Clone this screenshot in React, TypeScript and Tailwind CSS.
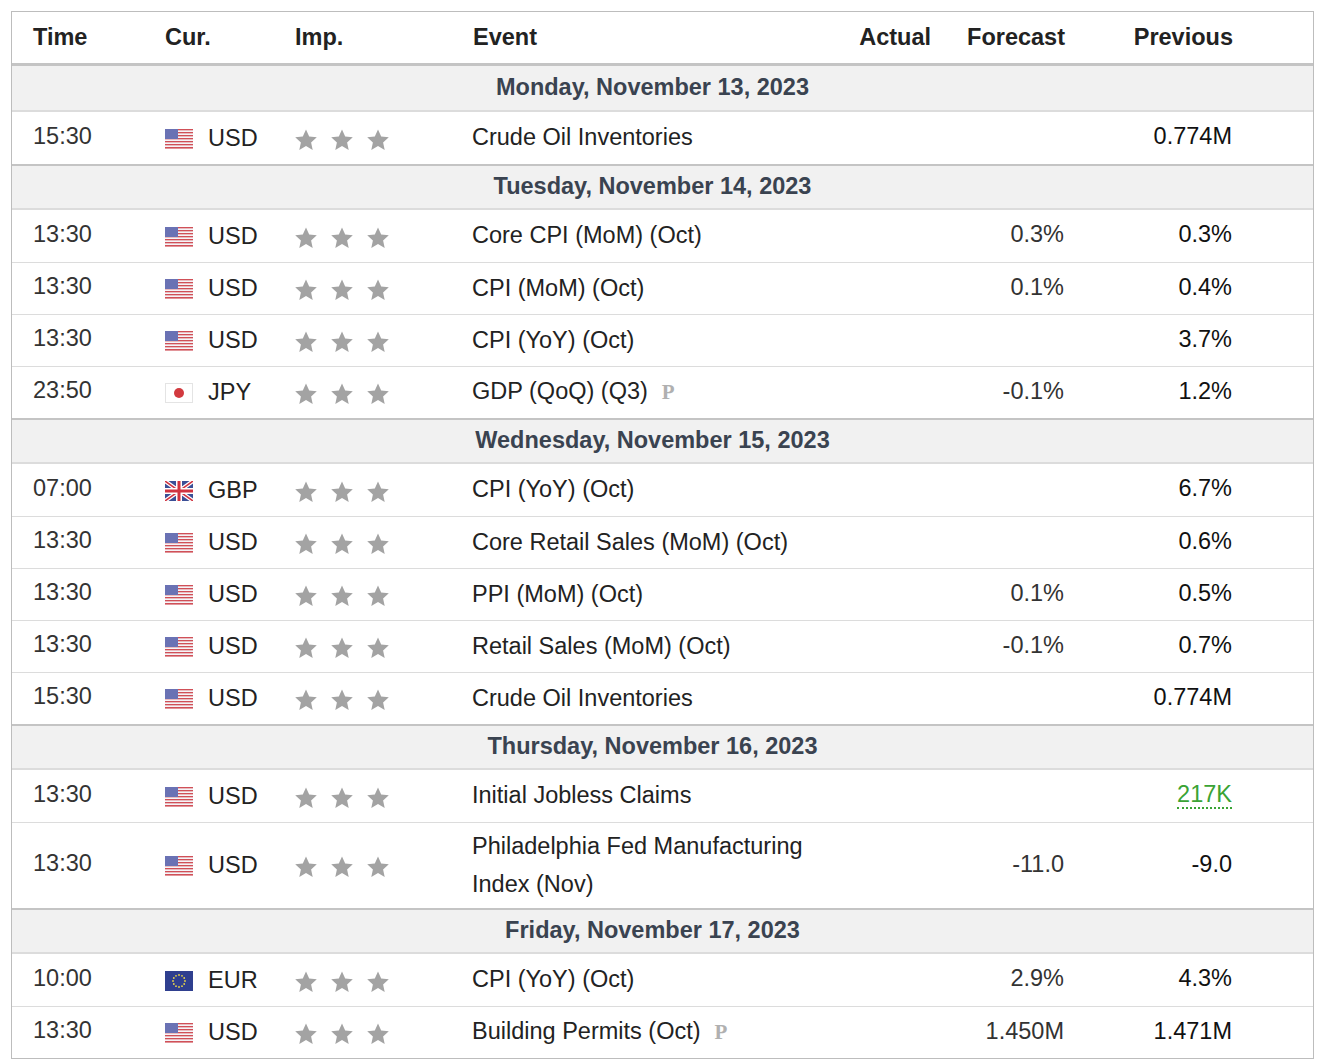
import React from "react";

type Row = { t: string; c: "USD" | "JPY" | "GBP" | "EUR"; e: string; p?: boolean; a?: string; f?: string; v?: string; green?: boolean; tall?: boolean };
type Day = { d: string; rows: Row[] };

const data: Day[] = [
  { d: "Monday, November 13, 2023", rows: [{ t: "15:30", c: "USD", e: "Crude Oil Inventories", v: "0.774M" }] },
  { d: "Tuesday, November 14, 2023", rows: [
    { t: "13:30", c: "USD", e: "Core CPI (MoM) (Oct)", f: "0.3%", v: "0.3%" },
    { t: "13:30", c: "USD", e: "CPI (MoM) (Oct)", f: "0.1%", v: "0.4%" },
    { t: "13:30", c: "USD", e: "CPI (YoY) (Oct)", v: "3.7%" },
    { t: "23:50", c: "JPY", e: "GDP (QoQ) (Q3)", p: true, f: "-0.1%", v: "1.2%" },
  ] },
  { d: "Wednesday, November 15, 2023", rows: [
    { t: "07:00", c: "GBP", e: "CPI (YoY) (Oct)", v: "6.7%" },
    { t: "13:30", c: "USD", e: "Core Retail Sales (MoM) (Oct)", v: "0.6%" },
    { t: "13:30", c: "USD", e: "PPI (MoM) (Oct)", f: "0.1%", v: "0.5%" },
    { t: "13:30", c: "USD", e: "Retail Sales (MoM) (Oct)", f: "-0.1%", v: "0.7%" },
    { t: "15:30", c: "USD", e: "Crude Oil Inventories", v: "0.774M" },
  ] },
  { d: "Thursday, November 16, 2023", rows: [
    { t: "13:30", c: "USD", e: "Initial Jobless Claims", v: "217K", green: true },
    { t: "13:30", c: "USD", e: "Philadelphia Fed Manufacturing Index (Nov)", f: "-11.0", v: "-9.0", tall: true },
  ] },
  { d: "Friday, November 17, 2023", rows: [
    { t: "10:00", c: "EUR", e: "CPI (YoY) (Oct)", f: "2.9%", v: "4.3%" },
    { t: "13:30", c: "USD", e: "Building Permits (Oct)", p: true, f: "1.450M", v: "1.471M" },
  ] },
];

function Flag({ c }: { c: string }) {
  if (c === "USD")
    return (
      <svg width="28" height="20" viewBox="0 0 28 20">
        {[0, 1, 2, 3, 4, 5, 6].map((i) => (
          <rect key={i} x="0" y={i * 3} width="28" height="1.6" fill="#d05058" />
        ))}
        {[0, 1, 2, 3, 4, 5].map((i) => (
          <rect key={"w" + i} x="0" y={i * 3 + 1.6} width="28" height="1.4" fill="#f4f4f8" />
        ))}
        <rect x="0" y="0" width="13" height="10" fill="#6a72b4" />
      </svg>
    );
  if (c === "JPY")
    return (
      <svg width="28" height="20" viewBox="0 0 28 20">
        <rect x="0.5" y="0.5" width="27" height="19" fill="#fff" stroke="#e4e4e4" />
        <circle cx="14" cy="10" r="5" fill="#d23a3f" />
      </svg>
    );
  if (c === "GBP")
    return (
      <svg width="28" height="20" viewBox="0 0 28 20">
        <rect width="28" height="20" fill="#3b4f96" />
        <path d="M0 0L28 20M28 0L0 20" stroke="#fff" strokeWidth="4" />
        <path d="M0 0L28 20M28 0L0 20" stroke="#d03340" strokeWidth="1.5" />
        <path d="M14 0V20M0 10H28" stroke="#fff" strokeWidth="6" />
        <path d="M14 0V20M0 10H28" stroke="#d03340" strokeWidth="3" />
      </svg>
    );
  return (
    <svg width="28" height="20" viewBox="0 0 28 20">
      <rect width="28" height="20" fill="#2f3f8f" />
      {Array.from({ length: 12 }).map((_, i) => {
        const a = (i * Math.PI) / 6;
        return <circle key={i} cx={14 + 6 * Math.cos(a)} cy={10 + 6 * Math.sin(a)} r="0.9" fill="#e8d44a" />;
      })}
    </svg>
  );
}

function Star() {
  return (
    <svg width="24" height="24" viewBox="0 0 24 24">
      <path d="M12 1.5l3.2 7 7.6.8-5.7 5.1 1.6 7.5L12 18l-6.7 3.9 1.6-7.5L1.2 9.3l7.6-.8z" fill="#a3a3a3" />
    </svg>
  );
}

const font = { fontFamily: '"Liberation Sans", Arial, sans-serif' };

export default function App() {
  return (
    <div className="bg-white w-[1326px] h-[1060px] pt-[11px] pl-[11px]" style={font}>
      <div className="w-[1303px] border border-[#bdbdbd] text-[23.5px] text-[#333]">
        <div className="flex h-[54px] items-center font-bold text-[#222] border-b-[3px] border-[#c4c4c4]">
          <div className="w-[153px] pl-[21px]">Time</div>
          <div className="w-[130px]">Cur.</div>
          <div className="w-[178px]">Imp.</div>
          <div className="w-[367px]">Event</div>
          <div className="w-[91px] text-right">Actual</div>
          <div className="w-[134px] text-right">Forecast</div>
          <div className="w-[168px] text-right">Previous</div>
        </div>
        {data.map((day, di) => (
          <div key={di}>
            <div className={`h-[46px] flex items-center justify-center pr-[20px] bg-[#f1f1f1] font-bold text-[#3a4350] ${di > 0 ? "border-t-2 border-[#c4c4c4]" : ""} border-b-2 border-b-[#dcdcdc]`}>
              {day.d}
            </div>
            {day.rows.map((r, ri) => (
              <div key={ri} className={`flex items-center ${r.tall ? "h-[86px]" : "h-[52px]"} ${ri > 0 ? "border-t border-[#dcdcdc]" : ""}`}>
                <div className="w-[153px] pl-[21px] -mt-[3px]">{r.t}</div>
                <div className="w-[130px] flex items-center gap-[15px] pt-[1px]">
                  <Flag c={r.c} />
                  <span className="text-[#222]">{r.c}</span>
                </div>
                <div className="w-[178px] flex gap-[12px] pt-[3px] -ml-[1px]">
                  <Star />
                  <Star />
                  <Star />
                </div>
                <div className="w-[367px] leading-[38px] text-[#222] -mt-[2px]">
                  {r.e}
                  {r.p && (
                    <span className="ml-[14px] text-[#b0b0b0] font-bold text-[21px]" style={{ fontFamily: '"Liberation Serif", serif' }}>
                      P
                    </span>
                  )}
                </div>
                <div className="w-[91px] text-right -mt-[2px]">{r.a ?? ""}</div>
                <div className="w-[134px] text-right -mt-[2px]">{r.f ?? ""}</div>
                <div className="w-[168px] text-right text-[#111] -mt-[2px]">
                  {r.green ? (
                    <span className="text-[#3aa335] border-b-2 border-dotted border-[#3aa335]">{r.v}</span>
                  ) : (
                    r.v
                  )}
                </div>
              </div>
            ))}
          </div>
        ))}
      </div>
    </div>
  );
}
